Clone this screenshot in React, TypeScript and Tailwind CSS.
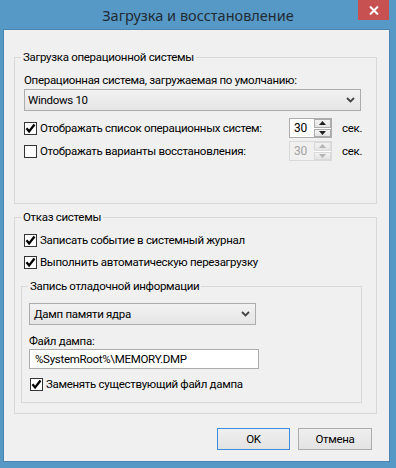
import React from "react";

function Check({ checked, disabled }: { checked: boolean; disabled?: boolean }) {
  return (
    <span
      className={
        "w-[13px] h-[13px] border bg-white flex items-center justify-center shrink-0 " +
        (disabled ? "border-[#bcbcbc]" : "border-[#333333]")
      }
    >
      {checked && (
        <svg width="11" height="11" viewBox="0 0 11 11">
          <path d="M1.5 5.3 L4.1 8.5 L9.5 1.5" stroke="#000" strokeWidth="2.3" fill="none" />
        </svg>
      )}
    </span>
  );
}

function Chevron() {
  return (
    <svg width="9" height="6" viewBox="0 0 9 6">
      <path d="M1 1 L4.5 4.5 L8 1" stroke="#444" strokeWidth="1.8" fill="none" />
    </svg>
  );
}

function Spinner({ disabled }: { disabled?: boolean }) {
  const b = disabled ? "border-[#d9d9d9]" : "border-[#acacac]";
  const tri = disabled ? "#b4b4b4" : "#1e1e1e";
  return (
    <div className={"w-[43px] h-[20px] flex border bg-white " + b}>
      <div
        className={
          "flex-1 pl-[4px] leading-[18px] text-[12px] " + (disabled ? "text-[#a3a3a3] bg-[#f0f0f0]" : "text-black")
        }
      >
        30
      </div>
      <div className="w-[17px] flex flex-col gap-[1px]">
        <div className={"flex-1 border bg-gradient-to-b from-[#f2f2f2] to-[#e4e4e4] flex items-center justify-center " + b}>
          <svg width="7" height="4" viewBox="0 0 7 4">
            <path d="M0 4 L3.5 0 L7 4 Z" fill={tri} />
          </svg>
        </div>
        <div className={"flex-1 border bg-gradient-to-b from-[#f2f2f2] to-[#e4e4e4] flex items-center justify-center " + b}>
          <svg width="7" height="4" viewBox="0 0 7 4">
            <path d="M0 0 L7 0 L3.5 4 Z" fill={tri} />
          </svg>
        </div>
      </div>
    </div>
  );
}

export default function App() {
  return (
    <div className="w-[396px] h-[468px] bg-[#5799c6] flex flex-col font-['Roboto','Liberation_Sans',sans-serif] text-[11.5px] tracking-[-0.3px] text-black overflow-hidden whitespace-nowrap">
      {/* title bar */}
      <div className="h-[29px] relative flex items-center justify-center shrink-0">
        <span className="text-[14.5px] tracking-normal font-['Noto_Sans',sans-serif] text-[#1f2a33] leading-[20px] mt-[1px]">
          Загрузка и восстановление
        </span>
        <div className="absolute top-0 right-[7px] w-[31px] h-[20px] bg-[#c75050] flex items-center justify-center">
          <svg width="10" height="9" viewBox="0 0 10 9">
            <path d="M1 0.5 L9 8.5 M9 0.5 L1 8.5" stroke="#fff" strokeWidth="2" />
          </svg>
        </div>
      </div>

      {/* client */}
      <div className="ml-[3px] w-[387px] h-[433px] border border-[#4a84b0] bg-[#f0f0f0] flex flex-col">
        {/* group 1 */}
        <fieldset className="ml-[10px] mt-[19px] w-[363px] border border-[#d8d8d8] p-0">
          <legend className="ml-[6px] px-[2px] leading-[16px]">Загрузка операционной системы</legend>
          <div className="pl-[9px] flex flex-col pb-[42px]">
            <div className="mt-[7px] leading-[16px]">Операционная система, загружаемая по умолчанию:</div>
            <div className="mt-[1px] w-[337px] h-[22px] border border-[#acacac] bg-gradient-to-b from-[#f2f2f2] to-[#e5e5e5] flex items-center pl-[3px] pr-[5px]">
              <span className="flex-1 leading-[16px]">Windows 10</span>
              <Chevron />
            </div>
            <div className="mt-[7px] h-[20px] flex items-center">
              <div className="w-[265px] flex items-center gap-[3px]">
                <Check checked />
                <span className="leading-[16px]">Отображать список операционных систем:</span>
              </div>
              <Spinner />
              <span className="ml-[10px] leading-[16px]">сек.</span>
            </div>
            <div className="mt-[3px] h-[20px] flex items-center">
              <div className="w-[265px] flex items-center gap-[3px]">
                <Check checked={false} />
                <span className="leading-[16px]">Отображать варианты восстановления:</span>
              </div>
              <Spinner disabled />
              <span className="ml-[10px] leading-[16px]">сек.</span>
            </div>
          </div>
        </fieldset>

        {/* group 2 */}
        <fieldset className="ml-[10px] mt-[5px] w-[363px] border border-[#d8d8d8] p-0">
          <legend className="ml-[6px] px-[2px] leading-[16px]">Отказ системы</legend>
          <div className="pl-[6px] flex flex-col pb-[10px]">
            <div className="mt-[7px] pl-[3px] h-[16px] flex items-center gap-[3px]">
              <Check checked />
              <span className="leading-[16px]">Записать событие в системный журнал</span>
            </div>
            <div className="mt-[6px] pl-[3px] h-[16px] flex items-center gap-[3px]">
              <Check checked />
              <span className="leading-[16px]">Выполнить автоматическую перезагрузку</span>
            </div>

            <fieldset className="mt-[8px] w-[341px] border border-[#d8d8d8] p-0">
              <legend className="ml-[6px] px-[2px] leading-[16px]">Запись отладочной информации</legend>
              <div className="pl-[7px] flex flex-col pb-[10px]">
                <div className="mt-[9px] w-[227px] h-[22px] border border-[#acacac] bg-gradient-to-b from-[#f2f2f2] to-[#e5e5e5] flex items-center pl-[4px] pr-[5px]">
                  <span className="flex-1 leading-[16px]">Дамп памяти ядра</span>
                  <Chevron />
                </div>
                <div className="mt-[9px] leading-[15px]">Файл дампа:</div>
                <div className="w-[230px] h-[20px] border border-[#acacac] bg-white flex items-center pl-[5px]">
                  <span className="leading-[16px]">%SystemRoot%\MEMORY.DMP</span>
                </div>
                <div className="mt-[7px] pl-[1px] h-[16px] flex items-center gap-[3px]">
                  <Check checked />
                  <span className="leading-[16px]">Заменять существующий файл дампа</span>
                </div>
              </div>
            </fieldset>
          </div>
        </fieldset>

        {/* buttons */}
        <div className="mt-[14px] flex justify-end gap-[8px] pr-[17px]">
          <button className="w-[73px] h-[22px] border border-[#3c8fe0] bg-gradient-to-b from-[#efefef] to-[#e3e3e3] leading-[16px]">
            OK
          </button>
          <button className="w-[74px] h-[22px] border border-[#acacac] bg-gradient-to-b from-[#efefef] to-[#e3e3e3] leading-[16px]">
            Отмена
          </button>
        </div>
      </div>
    </div>
  );
}
